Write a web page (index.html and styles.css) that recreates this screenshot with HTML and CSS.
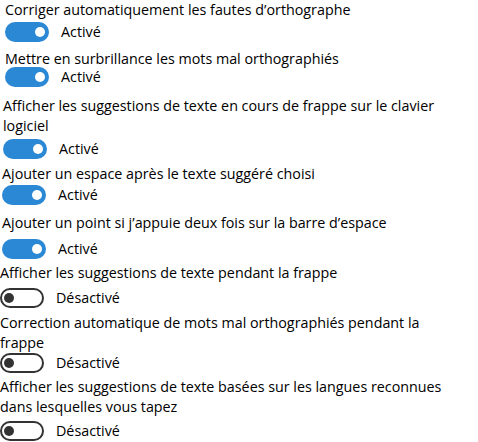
FILE: index.html
```html
<!DOCTYPE html>
<html lang="fr">
<head>
    <meta charset="UTF-8">
    <meta name="viewport" content="width=device-width, initial-scale=1.0">
    <title>Saisie</title>
    <link rel="stylesheet" href="styles.css">
</head>
<body>
    <!-- Typing settings -->
    <div class="settings">
        <div class="setting">
            <div class="label">Corriger automatiquement les fautes d’orthographe</div>
            <div class="state"><span class="switch on"><span class="knob"></span></span><span class="value">Activé</span></div>
        </div>
        <div class="setting">
            <div class="label">Mettre en surbrillance les mots mal orthographiés</div>
            <div class="state"><span class="switch on"><span class="knob"></span></span><span class="value">Activé</span></div>
        </div>
        <div class="setting">
            <div class="label">Afficher les suggestions de texte en cours de frappe sur le clavier<br>logiciel</div>
            <div class="state"><span class="switch on"><span class="knob"></span></span><span class="value">Activé</span></div>
        </div>
        <div class="setting">
            <div class="label">Ajouter un espace après le texte suggéré choisi</div>
            <div class="state"><span class="switch on"><span class="knob"></span></span><span class="value">Activé</span></div>
        </div>
        <div class="setting">
            <div class="label">Ajouter un point si j’appuie deux fois sur la barre d’espace</div>
            <div class="state"><span class="switch on"><span class="knob"></span></span><span class="value">Activé</span></div>
        </div>
        <div class="setting">
            <div class="label">Afficher les suggestions de texte pendant la frappe</div>
            <div class="state"><span class="switch off"><span class="knob"></span></span><span class="value">Désactivé</span></div>
        </div>
        <div class="setting">
            <div class="label">Correction automatique de mots mal orthographiés pendant la<br>frappe</div>
            <div class="state"><span class="switch off"><span class="knob"></span></span><span class="value">Désactivé</span></div>
        </div>
        <div class="setting">
            <div class="label">Afficher les suggestions de texte basées sur les langues reconnues<br>dans lesquelles vous tapez</div>
            <div class="state"><span class="switch off"><span class="knob"></span></span><span class="value">Désactivé</span></div>
        </div>
    </div>
</body>
</html>
```
FILE: styles.css
```css
* {
    box-sizing: border-box;
    margin: 0;
    padding: 0;
}

body {
    background: #fff;
    color: #000;
    font-family: 'Open Sans', 'Noto Sans', sans-serif;
    font-size: 14.3px;
    overflow: hidden;
}

/* Settings list */
.settings {
    display: flex;
    flex-direction: column;
}

.label {
    line-height: 20px;
    white-space: nowrap;
}

.state {
    display: flex;
    align-items: center;
    gap: 12px;
    height: 20px;
    margin-top: 2px;
}

.value {
    line-height: 20px;
}

/* Toggle switch */
.switch {
    width: 44px;
    height: 20px;
    border-radius: 10px;
    display: flex;
    align-items: center;
    padding: 0 4px;
    flex-shrink: 0;
}

.switch .knob {
    width: 10px;
    height: 10px;
    border-radius: 50%;
}

.switch.on {
    background: #2b88d5;
    justify-content: flex-end;
}

.switch.on .knob {
    background: #fff;
}

.switch.off {
    border: 2px solid #333;
    padding: 0 2px;
    justify-content: flex-start;
}

.switch.off .knob {
    background: #333;
}

.setting:nth-child(1) { padding-left: 5px; }
.setting:nth-child(2) { padding-left: 5px; margin-top: 7px; }
.setting:nth-child(2) .state { margin-top: -2px; }
.setting:nth-child(3) { padding-left: 3px; margin-top: 9px; }
.setting:nth-child(3) .state { margin-top: 3px; }
.setting:nth-child(4) { padding-left: 2px; margin-top: 5px; }
.setting:nth-child(4) .state { margin-top: 1px; }
.setting:nth-child(5) { padding-left: 2px; margin-top: 8px; }
.setting:nth-child(5) .state { margin-top: 6px; }
.setting:nth-child(6) { margin-top: 4px; }
.setting:nth-child(6) .state { margin-top: 5px; }
.setting:nth-child(7) { margin-top: 5px; }
.setting:nth-child(7) .state { margin-top: 0; }
.setting:nth-child(8) { margin-top: 4px; }
.setting:nth-child(8) .state { margin-top: 4px; }
```
